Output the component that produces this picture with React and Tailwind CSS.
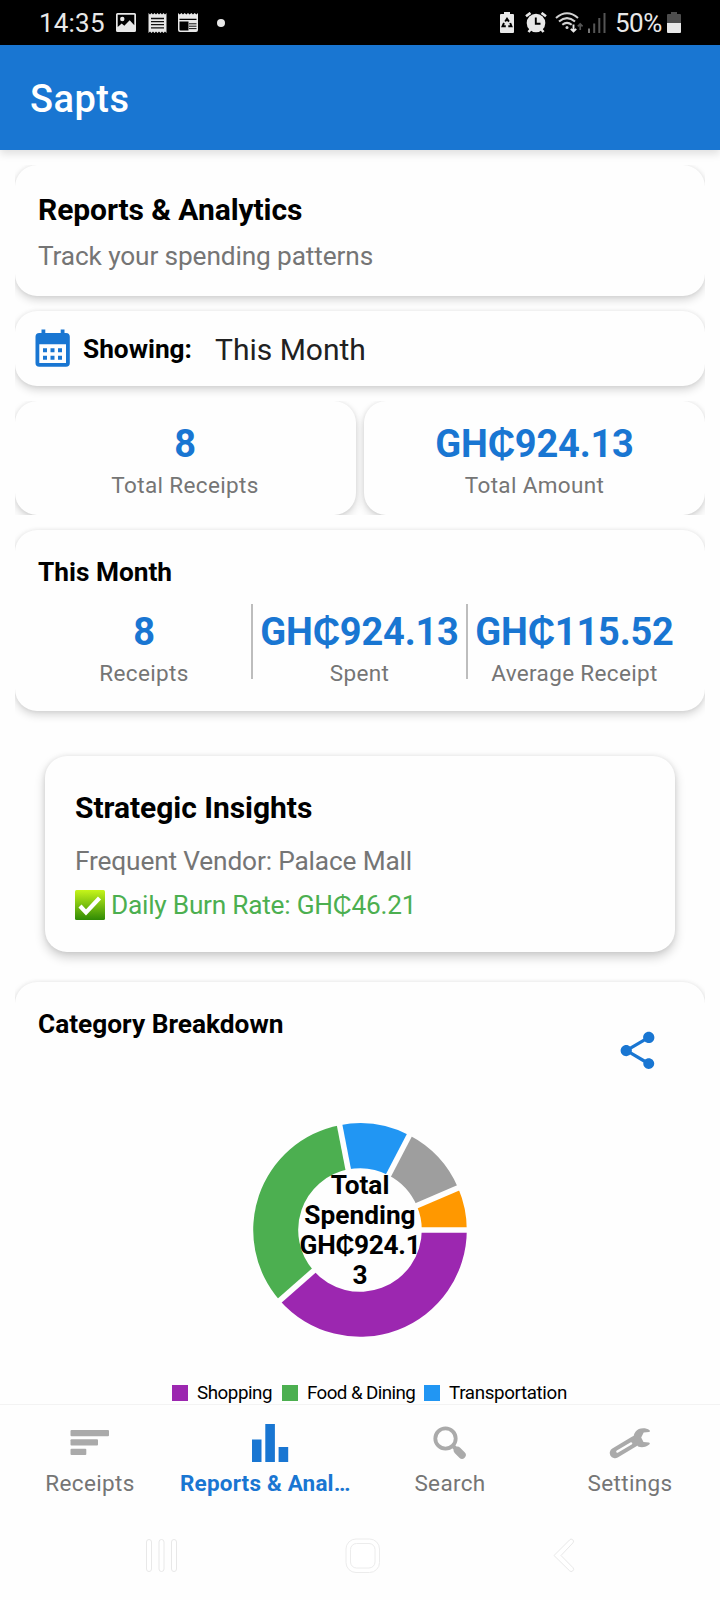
import React from 'react';

const categories = [
    { name: 'Shopping', color: '#9C27B0', from: 0, to: 138.7 },
    { name: 'Food & Dining', color: '#4CAF50', from: 138.7, to: 259 },
    { name: 'Transportation', color: '#2196F3', from: 259, to: 297.5 },
    { name: 'Other', color: '#9E9E9E', from: 297.5, to: 336.8 },
    { name: 'Utilities', color: '#FF9800', from: 336.8, to: 360 },
];

const legend = [
    { name: 'Shopping', swatch: 'bg-[#9C27B0]', text: 'w-[85px] tracking-[-0.45px]' },
    { name: 'Food & Dining', swatch: 'bg-[#4CAF50]', text: 'w-[117px] tracking-[-0.58px]' },
    { name: 'Transportation', swatch: 'bg-[#2196F3]', text: 'w-[120px] tracking-[-0.35px]' },
];

const polar = (r, deg) => {
    const a = (deg * Math.PI) / 180;
    return [107 + r * Math.cos(a), 107 + r * Math.sin(a)];
};

const slicePath = (from, to) => {
    const large = to - from > 180 ? 1 : 0;
    const [x1, y1] = polar(106.8, from);
    const [x2, y2] = polar(106.8, to);
    const [x3, y3] = polar(61.8, to);
    const [x4, y4] = polar(61.8, from);
    return `M${x1} ${y1}A106.8 106.8 0 ${large} 1 ${x2} ${y2}L${x3} ${y3}A61.8 61.8 0 ${large} 0 ${x4} ${y4}Z`;
};

const StatusBar = () => (
    <div className="h-[45px] bg-black flex items-center pl-[39px] pr-[39px] text-[#e8e8e8] text-[26px] leading-[45px]">
        <span className="w-[66px] pt-[1px] tracking-[0.2px] whitespace-nowrap">14:35</span>
        <svg className="ml-[11px]" width="20" height="19" viewBox="0 0 20 19" fill="#e8e8e8">
            <path fillRule="evenodd" d="M1.500 0h17A1.500 1.500 0 0 1 20 1.500v16a1.500 1.500 0 0 1-1.500 1.500h-17A1.500 1.500 0 0 1 0 17.500v-16A1.500 1.500 0 0 1 1.500 0zM1.700 1.700v12.300l4-3.600 2.600 2.400 5.400-5.600 4.600 5V1.700z" />
            <circle cx="6.300" cy="6" r="2.200" />
        </svg>
        <svg className="ml-[12px]" width="19" height="20" viewBox="0 0 19 20">
            <path fill="#e8e8e8" d="M.5 0l1.500 1.500L3.500 0 5 1.500 6.500 0 8 1.500 9.500 0 11 1.500 12.500 0 14 1.500 15.500 0 17 1.500 18.500 0v20L17 18.500 15.500 20 14 18.500 12.500 20 11 18.500 9.500 20 8 18.500 6.500 20 5 18.500 3.500 20 2 18.500.5 20z" />
            <path stroke="#111" strokeWidth="1.300" d="M3 5.500h13M3 8.600h13M3 11.700h13M3 14.800h13" />
        </svg>
        <svg className="ml-[11px]" width="20" height="19" viewBox="0 0 20 19">
            <path fill="#e8e8e8" fillRule="evenodd" d="M0 0l1.700 1.600L3.400 0l1.600 1.600L6.700 0l1.600 1.600L10 0l1.600 1.600L13.300 0 15 1.600 16.700 0l1.600 1.600L20 0v17a2 2 0 0 1-2 2H2a2 2 0 0 1-2-2zM1.500 5.800v1.200h17V5.800zM1.500 8.500v8a1 1 0 0 0 1 1h8v-9z" />
            <path stroke="#111" strokeWidth="1" d="M11 10.800h7.500M11 13.200h7.500M11 15.600h7.500" />
        </svg>
        <div className="ml-[19px] size-[8px] rounded-full bg-[#e8e8e8]" />
        <div className="ml-auto flex items-center">
            <svg width="14" height="21" viewBox="0 0 14 21">
                <path fill="#e8e8e8" d="M4 0h6v2h3a1 1 0 0 1 1 1v17a1 1 0 0 1-1 1H1a1 1 0 0 1-1-1V3a1 1 0 0 1 1-1h3z" />
                <path fill="none" stroke="#000" strokeWidth="1.900" d="M5.200 9.500L7 6.800l1.900 2.800M10.200 11l1.300 3.300H8.300M5.800 14.300H2.500L4 11" />
            </svg>
            <svg className="ml-[11px]" width="22" height="21" viewBox="0 0 22 21">
                <path stroke="#e8e8e8" strokeWidth="2.600" d="M1 4.300L5.500.9M21 4.300L16.500.9M3.500 20l2.500-3M18.500 20L16 17" />
                <circle cx="11" cy="11" r="9.300" fill="#e8e8e8" />
                <path fill="none" stroke="#000" strokeWidth="1.900" d="M10.800 5.500v6.300h4.700" />
            </svg>
            <svg className="ml-[8px]" width="28" height="21" viewBox="0 0 28 21">
                <path fill="none" stroke="#d2d2d2" strokeWidth="2.100" d="M1 6Q12 -3.500 23 6M4 9.500Q12 2.800 20 9.500M7.300 12.800Q12 9 16.700 12.800" />
                <circle cx="12" cy="15.600" r="1.500" fill="#d2d2d2" />
                <path fill="none" stroke="#e8e8e8" strokeWidth="1.900" d="M18.500 12.500v7M15.800 16.800l2.700 2.700 2.700-2.700" />
                <path fill="none" stroke="#555" strokeWidth="1.700" d="M25.200 18v-6M22.800 14.300l2.400-2.400 2.400 2.400" />
            </svg>
            <svg className="ml-[5px]" width="18" height="20" viewBox="0 0 18 20" fill="#555">
                <path fill="#777" d="M0 15.500h2V20H0z" />
                <path d="M5.200 10.500h2V20h-2zM10.300 5h2v15h-2zM15.500 0h2v20h-2z" />
            </svg>
            <span className="ml-[9px] w-[50px] pt-[1px] tracking-[-0.5px] whitespace-nowrap">50%</span>
            <svg className="ml-[2px]" width="14" height="21" viewBox="0 0 14 21">
                <path fill="#4d4d4d" d="M4 0h6v2h3a1 1 0 0 1 1 1v8H0V3a1 1 0 0 1 1-1h3z" />
                <path fill="#e8e8e8" d="M0 11h14v9a1 1 0 0 1-1 1H1a1 1 0 0 1-1-1z" />
            </svg>
        </div>
    </div>
);

const Card = ({ className, children }) => (
    <div className={`bg-[#fefefe] rounded-[22px] shadow-[0_4px_8px_rgba(0,0,0,0.16),0_0_4px_rgba(0,0,0,0.07)] ${className}`}>
        {children}
    </div>
);

const Stat = ({ value, label }) => (
    <div className="flex-1 flex flex-col items-center whitespace-nowrap">
        <div className="text-[38px] leading-[44px] tracking-[-0.2px] font-bold text-[#1976D2]">{value}</div>
        <div className="mt-[5px] text-[22.5px] leading-[28px] tracking-[0.35px] text-[#757575]">{label}</div>
    </div>
);

const CategoryChart = () => (
    <div className="relative w-[214px] h-[214px] mx-auto">
        <svg width="214" height="214" viewBox="0 0 214 214">
            {categories.map(c => <path key={c.name} d={slicePath(c.from, c.to)} fill={c.color} />)}
            {categories.map(c => {
                const [x, y] = polar(110, c.from);
                return <line key={c.name} x1="107" y1="107" x2={x} y2={y} stroke="#fefefe" strokeWidth="5.6" />;
            })}
        </svg>
        <div className="absolute inset-x-0 top-[47px] text-center text-[26.25px] leading-[30px] font-bold">
            <div>Total</div>
            <div>Spending</div>
            <div className="tracking-[-0.3px]">GH₵924.1</div>
            <div>3</div>
        </div>
    </div>
);

const NavItem = ({ label, active, children }) => (
    <div className="w-[180px] flex flex-col items-center">
        <div className="h-[45px] flex items-center">{children}</div>
        <div className={active
            ? 'mt-[4px] self-start text-[22.5px] leading-[28px] tracking-[0.18px] font-bold text-[#1976D2] whitespace-nowrap'
            : 'mt-[4px] text-[22.5px] leading-[28px] tracking-[0.35px] text-[#757575]'}>
            {label}
        </div>
    </div>
);

const App = () => (
    <div className="w-[720px] h-[1600px] overflow-hidden bg-[#fefefe] font-['Roboto',sans-serif] text-black flex flex-col">
        <StatusBar />
        <header className="relative z-10 h-[105px] shrink-0 bg-[#1976D2] text-white flex items-center pl-[30px] shadow-[0_4px_8px_rgba(0,0,0,0.12)]">
            <h1 className="text-[38px] leading-[44px] font-medium tracking-[0.5px] pt-[3px]">Sapts</h1>
        </header>

        <main className="mt-[15px] mx-[15px] h-[1239px] shrink-0 overflow-hidden">
            <Card className="h-[131px] pt-[27px] pl-[23px]">
                <h2 className="text-[30px] leading-[36px] font-bold tracking-[-0.08px]">Reports &amp; Analytics</h2>
                <p className="mt-[12px] text-[26.25px] leading-[32px] tracking-[-0.13px] text-[#757575]">Track your spending patterns</p>
            </Card>

            <Card className="mt-[15px] h-[75px] flex items-center pl-[15px]">
                <svg width="45" height="45" viewBox="0 0 45 45" fill="#1976D2">
                    <path fillRule="evenodd" d="M11.500 3.500h3.800V7h15.400V3.500h3.800V7H36a3.800 3.800 0 0 1 3.800 3.800V37a3.800 3.800 0 0 1-3.800 3.800H9.300A3.800 3.800 0 0 1 5.500 37V10.800A3.800 3.800 0 0 1 9.300 7h2.200zM9.300 18.300v18.800H36V18.300z" />
                    <path d="M13 22.300h4v4h-4zM20.500 22.300h4v4h-4zM28 22.300h4v4h-4zM13 29.800h4v4h-4zM20.500 29.800h4v4h-4zM28 29.800h4v4h-4z" />
                </svg>
                <span className="ml-[8px] w-[109px] text-[26.25px] leading-[32px] font-bold whitespace-nowrap">Showing:</span>
                <span className="ml-[23px] pt-[2px] text-[30px] leading-[36px] text-[#212121]">This Month</span>
            </Card>

            <div className="mt-[15px] h-[114px] flex gap-[8px] overflow-hidden">
                <Card className="w-[341px] flex pt-[21px] pr-[1px]">
                    <Stat value="8" label="Total Receipts" />
                </Card>
                <Card className="w-[341px] flex pt-[21px]">
                    <Stat value="GH₵924.13" label="Total Amount" />
                </Card>
            </div>

            <Card className="mt-[15px] h-[181px] pt-[26px] pl-[23px] pr-[24px]">
                <h3 className="text-[26.25px] leading-[32px] font-bold">This Month</h3>
                <div className="mt-[16px] h-[75px] flex">
                    <div className="w-[213px] flex justify-center pt-[6px] pr-[1px]">
                        <Stat value="8" label="Receipts" />
                    </div>
                    <div className="w-[2px] bg-[#bdbdbd]" />
                    <div className="w-[213px] flex justify-center pt-[6px]">
                        <Stat value="GH₵924.13" label="Spent" />
                    </div>
                    <div className="w-[2px] bg-[#bdbdbd]" />
                    <div className="w-[213px] flex justify-center pt-[6px]">
                        <Stat value="GH₵115.52" label="Average Receipt" />
                    </div>
                </div>
            </Card>

            <Card className="mt-[45px] mx-[30px] h-[196px] pt-[34px] pl-[30px] shadow-[0_5px_11px_rgba(0,0,0,0.20),0_0_5px_rgba(0,0,0,0.08)]">
                <h2 className="text-[30px] leading-[36px] font-bold tracking-[-0.05px]">Strategic Insights</h2>
                <p className="mt-[19px] text-[26.25px] leading-[32px] tracking-[-0.15px] text-[#757575]">Frequent Vendor: Palace Mall</p>
                <p className="mt-[12px] flex items-center text-[26.25px] leading-[32px] tracking-[-0.24px] text-[#4CAF50]">
                    <svg className="mr-[6px]" width="30" height="30" viewBox="0 0 30 30">
                        <defs>
                            <linearGradient id="check" x1="0" y1="0" x2="0" y2="1">
                                <stop offset="0" stopColor="#c6f51a" />
                                <stop offset="1" stopColor="#2f8a05" />
                            </linearGradient>
                        </defs>
                        <rect width="30" height="30" rx="1.500" fill="url(#check)" />
                        <path d="M5 16l6 6.500L24.500 8" fill="none" stroke="#fff" strokeWidth="4.200" />
                    </svg>
                    Daily Burn Rate: GH₵46.21
                </p>
            </Card>

            <Card className="mt-[30px] h-[500px] pt-[26px]">
                <div className="h-[97px] pl-[23px] pr-[45px] flex justify-between items-start">
                    <h3 className="text-[26.25px] leading-[32px] font-bold">Category Breakdown</h3>
                    <svg className="mt-[20px]" width="45" height="45" viewBox="0 0 24 24" fill="#1976D2">
                        <path d="M18 16.080c-.76 0-1.440.3-1.960.770L8.910 12.700c.05-.23.09-.46.09-.7s-.04-.47-.09-.7l7.050-4.110c.54.5 1.250.81 2.040.81 1.660 0 3-1.340 3-3s-1.340-3-3-3-3 1.340-3 3c0 .24.04.47.09.7L8.040 9.810C7.500 9.310 6.790 9 6 9c-1.660 0-3 1.340-3 3s1.340 3 3 3c.79 0 1.500-.31 2.040-.81l7.120 4.160c-.05.21-.08.43-.08.65 0 1.610 1.310 2.920 2.920 2.920s2.920-1.310 2.920-2.920-1.310-2.920-2.920-2.920z" />
                    </svg>
                </div>
                <div className="pt-[18px]">
                    <CategoryChart />
                </div>
                <div className="mt-[46px] ml-[157px] flex items-center">
                    {legend.map(item => (
                        <div key={item.name} className="flex items-start">
                            <div className={`mt-[2px] size-[16px] ${item.swatch}`} />
                            <div className={`ml-[9px] text-[18.75px] leading-[21px] whitespace-nowrap ${item.text}`}>{item.name}</div>
                        </div>
                    ))}
                </div>
            </Card>
        </main>

        <nav className="h-[112px] shrink-0 border-t border-[#f3f3f3] pt-[15px] flex">
            <NavItem label="Receipts">
                <svg className="mr-[1px]" width="40" height="25" viewBox="0 0 40 25" fill="#aaa">
                    <rect x=".5" width="38.500" height="6.200" rx="1" />
                    <rect x=".5" y="9.300" width="27.500" height="6.200" rx="1" />
                    <rect x=".5" y="18.700" width="15.800" height="6.200" rx="1" />
                </svg>
            </NavItem>
            <NavItem label="Reports & Anal…" active>
                <svg width="37" height="38" viewBox="0 0 37 38" fill="#1976D2">
                    <path d="M0 15.500h9.500V38H0zM13.300 0h9.600v38h-9.600zM26.600 23h9.600v15h-9.600z" />
                </svg>
            </NavItem>
            <NavItem label="Search">
                <svg width="34" height="34" viewBox="0 0 34 34" fill="none" stroke="#aaa">
                    <circle cx="12.500" cy="12.500" r="10.200" strokeWidth="3.800" />
                    <path d="M20 20l4 4" strokeWidth="4" />
                    <path d="M24.500 24.500l4.500 4.500" strokeWidth="7.500" strokeLinecap="round" />
                </svg>
            </NavItem>
            <NavItem label="Settings">
                <svg width="42" height="32" viewBox="0 0 42 32">
                    <path d="M6 26L26 14" stroke="#aaa" strokeWidth="10.500" strokeLinecap="round" />
                    <path d="M8.500 24.500L22 16.500" stroke="#fefefe" strokeWidth="2.600" strokeLinecap="round" />
                    <path d="M40.500 3.300c-4-3-11-2.600-14 1.400-2 2.700-2.300 5.300-1.500 8l4 6.800c3.600 1.400 8.300.8 11.500-2.200.6-.6.2-1.700-.6-1.800l-5.400-.6-2.300-4.500 2.500-4.800 5.300-.5c1-.1 1.300-1.200.5-1.800z" fill="#aaa" />
                </svg>
            </NavItem>
        </nav>

        <div className="pt-[22px] flex items-start">
            <svg className="ml-[145px]" width="33" height="35" viewBox="0 0 33 35" fill="#fff" stroke="#e8e8e8">
                <rect x="1.500" y="1.500" width="5" height="32" rx="2.500" />
                <rect x="14" y="1.500" width="5" height="32" rx="2.500" />
                <rect x="26.500" y="1.500" width="5" height="32" rx="2.500" />
            </svg>
            <svg className="ml-[167px]" width="36" height="36" viewBox="0 0 36 36" fill="#fff" stroke="#ececec">
                <rect x="1" y="1" width="33.500" height="33.500" rx="10" />
                <rect x="5.500" y="5.500" width="24.500" height="24.500" rx="6" />
            </svg>
            <svg className="ml-[172px]" width="22" height="35" viewBox="0 0 22 35" fill="#fff" stroke="#e8e8e8" strokeLinejoin="round">
                <path d="M1 17.500L16.500 2a2.200 2.200 0 0 1 3.500 2.800L8 17.500l12 12.200a2.200 2.200 0 0 1-3.500 3z" />
            </svg>
        </div>
    </div>
);

export default App;
